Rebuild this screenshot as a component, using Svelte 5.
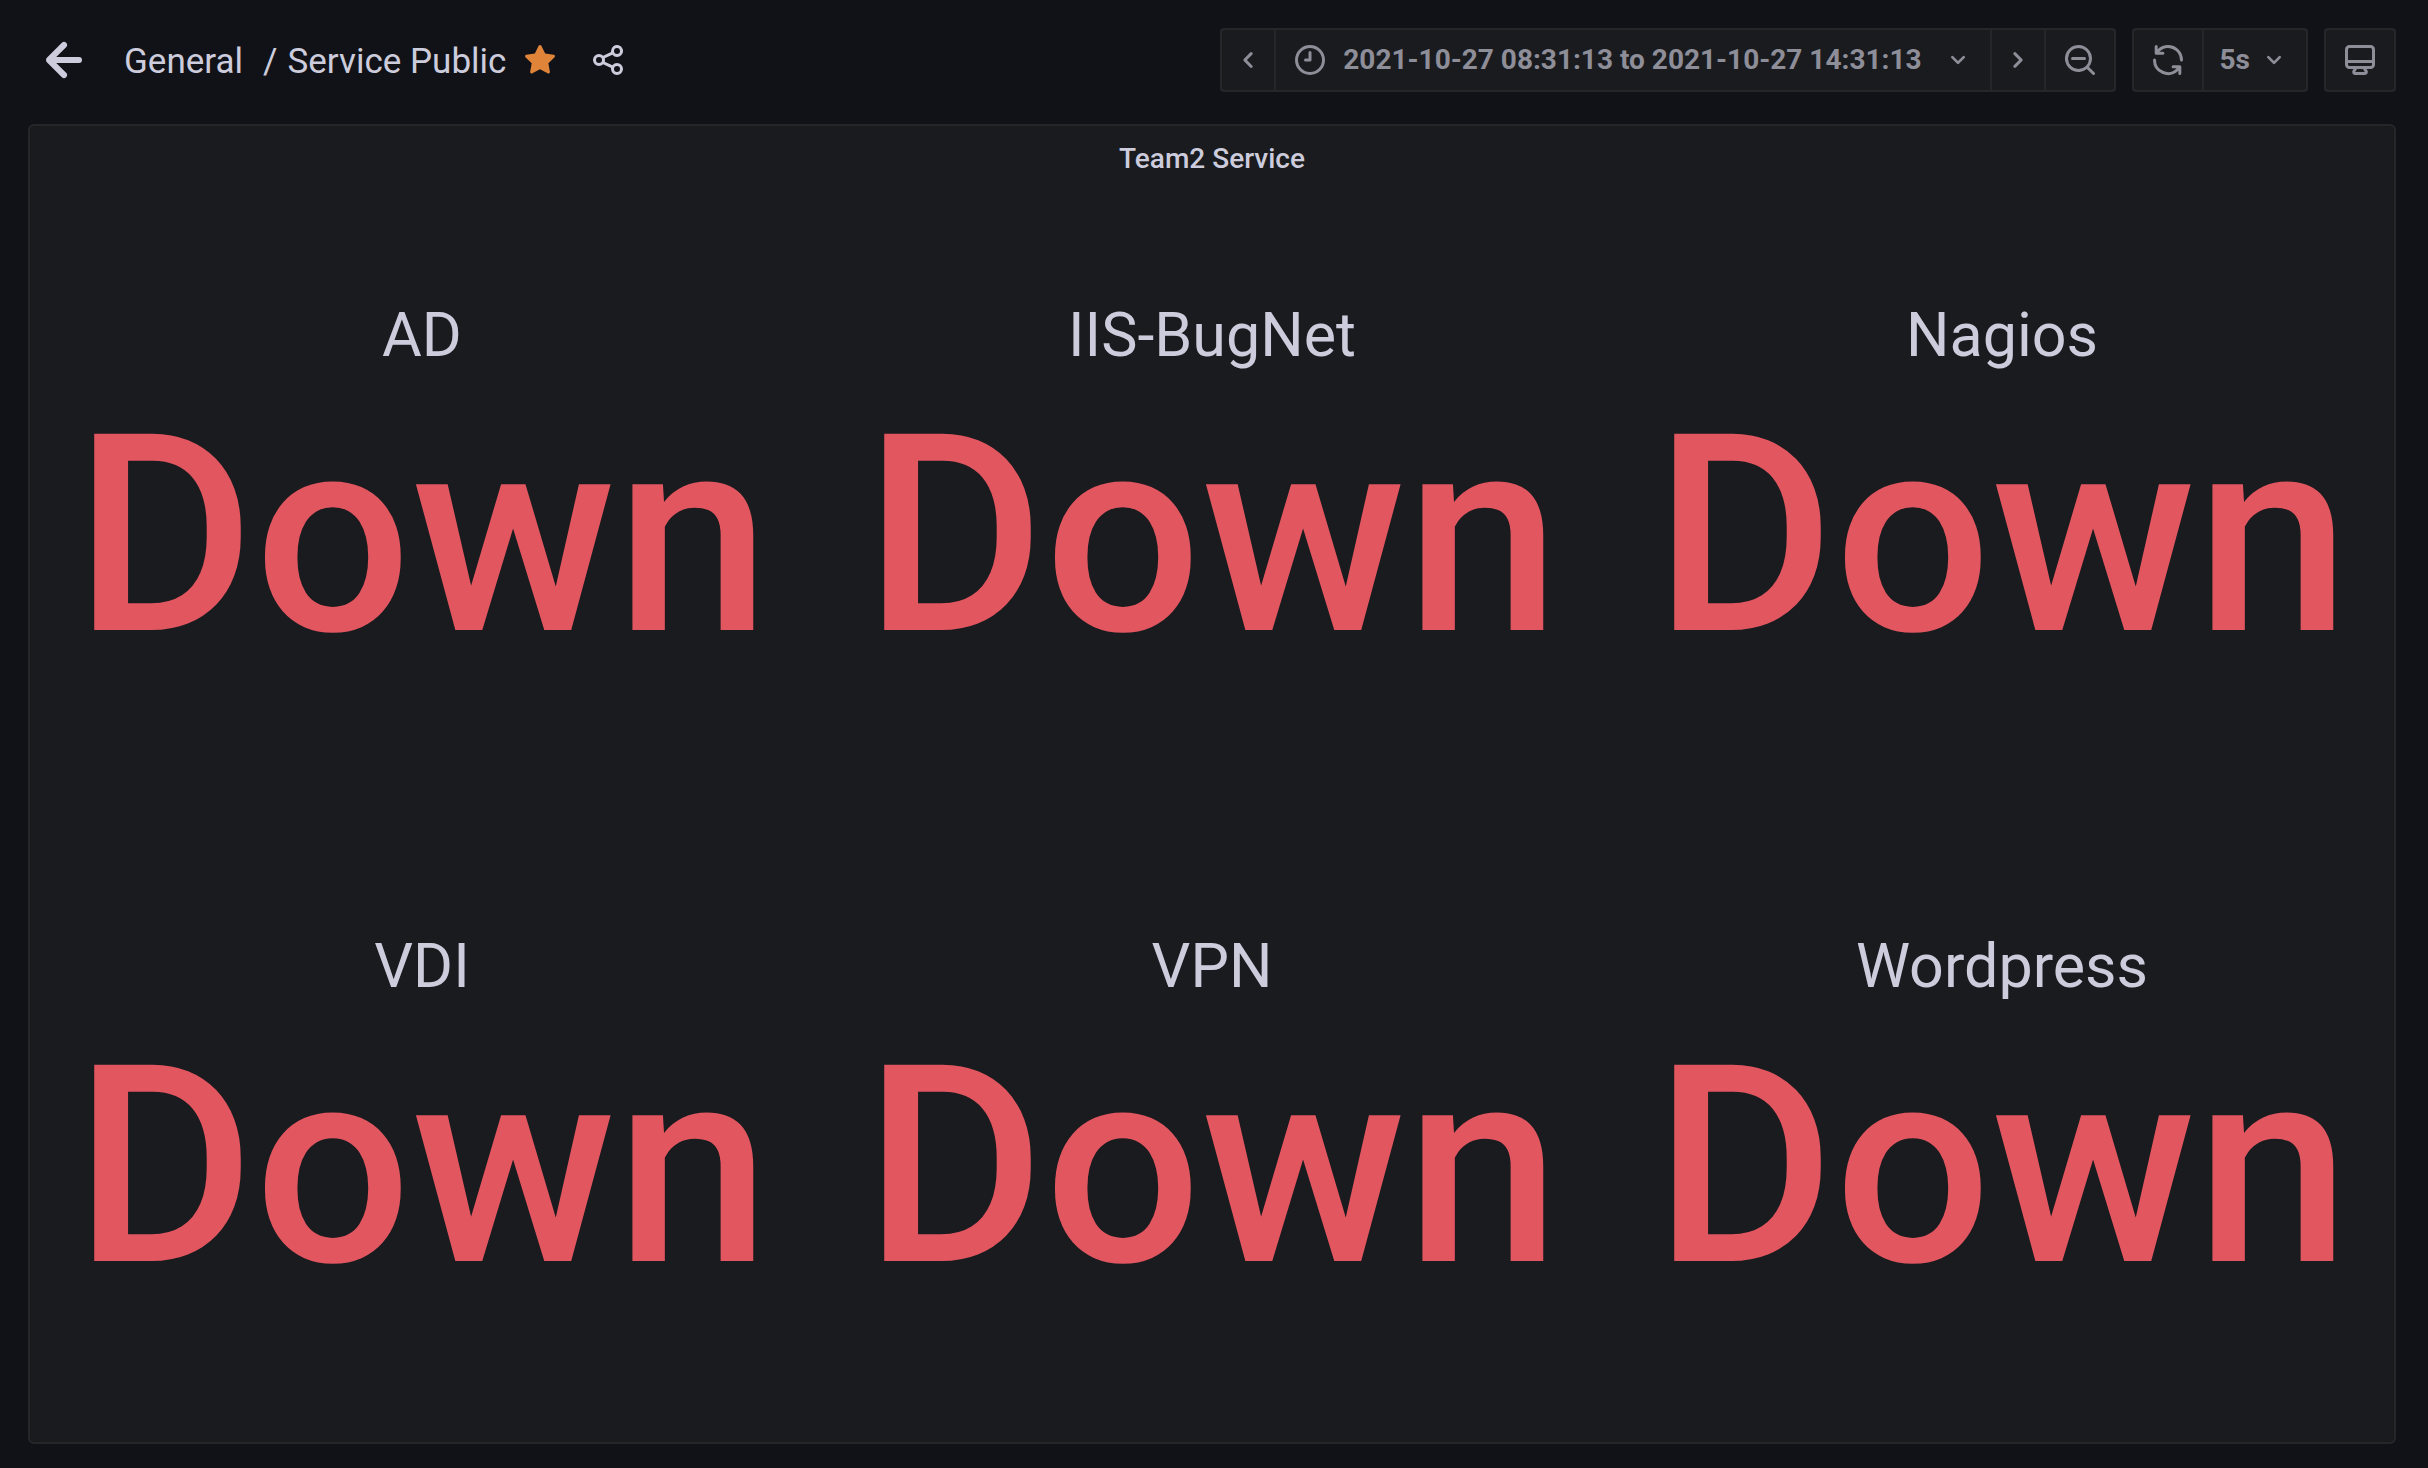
<script>
    // Services shown in the panel, with their last reported state.
    let services = $state([
        { name: "AD", status: "Down" },
        { name: "IIS-BugNet", status: "Down" },
        { name: "Nagios", status: "Down" },
        { name: "VDI", status: "Down" },
        { name: "VPN", status: "Down" },
        { name: "Wordpress", status: "Down" },
    ]);

    let from = "2021-10-27 08:31:13";
    let to = "2021-10-27 14:31:13";

    let intervals = ["5s", "10s", "30s", "1m", "5m"];
    let interval = $state("5s");
    let starred = $state(true);

    const icons = {
        back: "M17,11H9.41l3.3-3.29a1,1,0,1,0-1.42-1.42l-5,5a1,1,0,0,0-.21.33,1,1,0,0,0,0,.76,1,1,0,0,0,.21.33l5,5a1,1,0,0,0,1.42,0,1,1,0,0,0,0-1.42L9.41,13H17a1,1,0,0,0,0-2Z",
        star: "M17.56,21a1,1,0,0,1-.46-.11L12,18.22l-5.1,2.67a1,1,0,0,1-1.45-1.06l1-5.63L2.32,10.2a1,1,0,0,1-.25-1A1,1,0,0,1,2.88,8.5l5.7-.83,2.51-5.13a1,1,0,0,1,1.82,0l2.54,5.12,5.7.83a1,1,0,0,1,.81.68,1,1,0,0,1-.25,1l-4.12,4,1,5.63a1,1,0,0,1-.4,1A1,1,0,0,1,17.56,21Z",
        share: "M18,14a4,4,0,0,0-3.08,1.48l-5.1-2.35a3.64,3.64,0,0,0,0-2.26l5.1-2.35A4,4,0,1,0,14,6a4.17,4.17,0,0,0,.07.71L8.79,9.14a4,4,0,1,0,0,5.72l5.28,2.43A4.17,4.17,0,0,0,14,18a4,4,0,1,0,4-4ZM18,4a2,2,0,1,1-2,2A2,2,0,0,1,18,4ZM6,14a2,2,0,1,1,2-2A2,2,0,0,1,6,14Zm12,6a2,2,0,1,1,2-2A2,2,0,0,1,18,20Z",
        left: "M11.29,12l3.54-3.54a1,1,0,0,0,0-1.41,1,1,0,0,0-1.42,0L9.17,11.29a1,1,0,0,0,0,1.42L13.41,17a1,1,0,0,0,.71.29,1,1,0,0,0,.71-.29,1,1,0,0,0,0-1.41Z",
        right: "M14.83,11.29,10.59,7.05a1,1,0,0,0-1.42,0,1,1,0,0,0,0,1.41L12.71,12,9.17,15.54a1,1,0,0,0,0,1.41,1,1,0,0,0,.71.29,1,1,0,0,0,.71-.29l4.24-4.24A1,1,0,0,0,14.83,11.29Z",
        down: "M17,9.17a1,1,0,0,0-1.41,0L12,12.71,8.46,9.17a1,1,0,0,0-1.41,0,1,1,0,0,0,0,1.42l4.24,4.24a1,1,0,0,0,1.42,0L17,10.59A1,1,0,0,0,17,9.17Z",
        clock: "M12,2A10,10,0,1,0,22,12,10,10,0,0,0,12,2Zm0,18a8,8,0,1,1,8-8A8,8,0,0,1,12,20ZM12,6a1,1,0,0,0-1,1v4H9a1,1,0,0,0,0,2h3a1,1,0,0,0,1-1V7A1,1,0,0,0,12,6Z",
        zoomOut: "M21.71,20.29,18,16.61A9,9,0,1,0,16.61,18l3.68,3.68a1,1,0,0,0,1.42,0A1,1,0,0,0,21.71,20.29ZM11,18a7,7,0,1,1,7-7A7,7,0,0,1,11,18Zm4-8H7a1,1,0,0,0,0,2h8a1,1,0,0,0,0-2Z",
        sync: "M19.91,15.51H15.38a1,1,0,0,0,0,2h2.4A8,8,0,0,1,4,12a1,1,0,1,0-2,0,10,10,0,0,0,16.88,7.23V21a1,1,0,0,0,2,0V16.5A1,1,0,0,0,19.91,15.51ZM12,2A10,10,0,0,0,5.12,4.77V3a1,1,0,0,0-2,0V7.5a1,1,0,0,0,1,1h4.5a1,1,0,0,0,0-2H6.22A8,8,0,0,1,20,12a1,1,0,0,0,2,0A10,10,0,0,0,12,2Z",
        monitor: "M19,2H5A3,3,0,0,0,2,5V15a3,3,0,0,0,3,3H7.64l-.58,1a2,2,0,0,0,0,2,2,2,0,0,0,1.75,1h6.46A2,2,0,0,0,17,21a2,2,0,0,0,0-2l-.59-1H19a3,3,0,0,0,3-3V5A3,3,0,0,0,19,2ZM8.77,20,10,18H14l1.2,2ZM20,15a1,1,0,0,1-1,1H5a1,1,0,0,1-1-1V14H20Zm0-3H4V5A1,1,0,0,1,5,4H19a1,1,0,0,1,1,1Z",
    };
</script>

{#snippet icon(name, size = "")}
    <svg class="icon {size}" viewBox="0 0 24 24" aria-hidden="true">
        <path d={icons[name]} />
    </svg>
{/snippet}

<div class="dashboard">
    <header class="toolbar">
        <button class="plain" aria-label="Go back">{@render icon("back", "large")}</button>

        <nav class="breadcrumb" aria-label="Breadcrumb">
            <a href="#general">General</a>
            <span class="slash">/</span>
            <a href="#service-public">Service Public</a>
        </nav>

        <button
            class="plain favorite"
            class:starred
            aria-label="Mark as favorite"
            aria-pressed={starred}
            onclick={() => (starred = !starred)}
        >
            {@render icon("star")}
        </button>
        <button class="plain share" aria-label="Share dashboard">{@render icon("share")}</button>

        <div class="controls">
            <div class="group">
                <button class="narrow" aria-label="Move time range back">{@render icon("left")}</button>
                <button class="range">
                    {@render icon("clock")}
                    <span>{from} to {to}</span>
                    {@render icon("down", "small")}
                </button>
                <button class="narrow" aria-label="Move time range forward">{@render icon("right")}</button>
                <button aria-label="Zoom out time range">{@render icon("zoomOut")}</button>
            </div>

            <div class="group">
                <button aria-label="Refresh dashboard">{@render icon("sync")}</button>
                <label class="interval">
                    <select bind:value={interval} aria-label="Refresh interval">
                        {#each intervals as option}
                            <option>{option}</option>
                        {/each}
                    </select>
                    {@render icon("down", "small")}
                </label>
            </div>

            <div class="group">
                <button aria-label="Cycle view mode">{@render icon("monitor")}</button>
            </div>
        </div>
    </header>

    <main class="panel">
        <h2>Team2 Service</h2>
        <div class="stats">
            {#each services as service}
                <section class="stat">
                    <h3>{service.name}</h3>
                    <p>{service.status}</p>
                </section>
            {/each}
        </div>
    </main>
</div>

<style>
    :global(body) {
        margin: 0;
        background: #111217;
    }

    .dashboard {
        --panel: #1a1b1f;
        --line: #25262a;
        --text: #ccccdc;
        --muted: #8e8e99;

        display: flex;
        flex-direction: column;
        box-sizing: border-box;
        min-height: 100vh;
        padding: 28px 32px 24px 28px;
        gap: 32px;
        color: var(--text);
        font-family: Roboto, "Liberation Sans", sans-serif;
    }

    button,
    select {
        border: 0;
        margin: 0;
        background: none;
        color: inherit;
        font: inherit;
        cursor: pointer;
    }

    .icon {
        display: block;
        flex: none;
        width: 36px;
        height: 36px;
        fill: currentColor;
    }

    .icon.small {
        width: 32px;
        height: 32px;
    }

    .icon.large {
        width: 72px;
        height: 72px;
    }

    /* Top row */
    .toolbar {
        display: flex;
        align-items: center;
        height: 64px;
    }

    .plain {
        padding: 0;
    }

    .breadcrumb {
        display: flex;
        gap: 10px;
        margin-left: 24px;
        padding-top: 3px;
        font-size: 35px;
        line-height: 48px;
        white-space: nowrap;
    }

    .breadcrumb a {
        color: inherit;
        text-decoration: none;
    }

    .slash {
        margin-left: 10px;
    }

    .favorite {
        margin-left: 16px;
    }

    .starred {
        color: #e0843a;
    }

    .share {
        margin-left: 32px;
    }

    .controls {
        display: flex;
        gap: 16px;
        margin-left: auto;
        color: var(--muted);
        font-size: 28px;
        font-weight: 700;
        line-height: 32px;
    }

    .group {
        display: flex;
        box-sizing: border-box;
        height: 64px;
        border: 2px solid var(--line);
        border-radius: 4px;
        background: var(--panel);
    }

    .group button,
    .interval {
        display: flex;
        align-items: center;
        padding: 0 16px;
        white-space: nowrap;
    }

    .group > :not(:first-child) {
        border-left: 2px solid var(--line);
    }

    .group .narrow {
        padding: 0 8px;
    }

    .range span {
        margin: 0 20px 0 15px;
    }

    .interval {
        gap: 8px;
    }

    select {
        appearance: none;
        field-sizing: content;
        padding: 0;
    }

    /* Panel with the status grid */
    .panel {
        display: flex;
        flex: 1;
        flex-direction: column;
        border: 2px solid var(--line);
        border-radius: 6px;
        background: var(--panel);
    }

    h2 {
        margin: 0;
        padding-top: 10px;
        font-size: 28px;
        font-weight: 500;
        line-height: 46px;
        text-align: center;
    }

    .stats {
        display: grid;
        flex: 1;
        grid-template-columns: repeat(3, 1fr);
        grid-auto-rows: 1fr;
        gap: 16px 38px;
        padding: 0 16px 14px;
    }

    .stat {
        display: flex;
        flex-direction: column;
        justify-content: center;
        min-width: 0;
        text-align: center;
    }

    h3 {
        margin: 0;
        font-size: 61px;
        font-weight: 400;
        line-height: 92px;
    }

    .stat p {
        margin: 0;
        color: #e25660;
        font-size: 276px;
        font-weight: 500;
        line-height: 310px;
    }
</style>
